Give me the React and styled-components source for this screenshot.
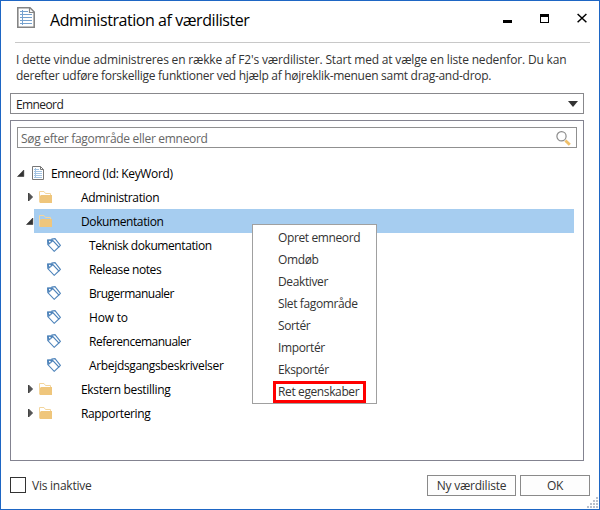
import React from "react";
import styled, { createGlobalStyle } from "styled-components";

const tree = [
  { label: "Administration", type: "folder", spacing: "-0.34px" },
  { label: "Dokumentation", type: "folder", open: true, selected: true, spacing: "-0.4px" },
  { label: "Teknisk dokumentation", type: "tag", spacing: "-0.42px" },
  { label: "Release notes", type: "tag", spacing: "-0.4px" },
  { label: "Brugermanualer", type: "tag", spacing: "-0.5px" },
  { label: "How to", type: "tag", spacing: "-0.2px" },
  { label: "Referencemanualer", type: "tag", spacing: "-0.5px" },
  { label: "Arbejdsgangsbeskrivelser", type: "tag", spacing: "-0.34px" },
  { label: "Ekstern bestilling", type: "folder", spacing: "-0.32px" },
  { label: "Rapportering", type: "folder", spacing: "-0.36px" },
];

const menuItems = [
  "Opret emneord",
  "Omdøb",
  "Deaktiver",
  "Slet fagområde",
  "Sortér",
  "Importér",
  "Eksportér",
  "Ret egenskaber",
];

const TitleIcon = () => (
  <svg width="18" height="21" viewBox="0 0 18 21">
    <path d="M.8.8H13L17.2 5V20.2H.8Z" fill="#fff" stroke="#858585" strokeWidth="1.6" />
    <path d="M12.5 1V5.5H17" fill="none" stroke="#858585" strokeWidth="1.2" />
    <path d="M3 4.5H11M3 7.5H15M3 10.5H15M3 13.5H15M3 16.5H15M5.5 3V18" stroke="#76a2cf" />
  </svg>
);

const ListIcon = () => (
  <svg width="12" height="14" viewBox="0 0 12 14">
    <path d="M.5.5H8.5L11.5 3.5V13.5H.5Z" fill="#fff" stroke="#777" />
    <path d="M8.5.5V3.5H11.5" fill="none" stroke="#777" />
    <path d="M2 3.5H7M2 5.5H10M2 7.5H10M2 9.5H10M2 11.5H10M3.5 2V12" stroke="#a3c3e2" />
  </svg>
);

const FolderIcon = () => (
  <svg width="13" height="12" viewBox="0 0 13 12">
    <path d="M.5 11.5V.5H5L6.5 2.5H11.5V4" fill="none" stroke="#f3d59c" />
    <path d="M2 4H13V12H1V5Z" fill="#efc67c" />
  </svg>
);

const TagIcon = () => (
  <svg width="14" height="14" viewBox="0 0 14 14">
    <path d="M4.4 1.1 8 .6 13.4 7.4 12 9" fill="#fff" stroke="#4d83ba" strokeWidth="1.1" />
    <path d="M.6 2 5.6 2.4 11.9 9 7.2 13.3.8 6.6Z" fill="#fff" stroke="#4d83ba" strokeWidth="1.1" />
    <path d="M.4 1.7 5.4 1.3 6 3.2 1.4 7.2Z" fill="#4d83ba" />
    <circle cx="2.8" cy="3.6" r=".9" fill="#fff" />
  </svg>
);

const SearchIcon = () => (
  <svg width="15" height="15" viewBox="0 0 15 15">
    <circle cx="5.5" cy="5.3" r="4.6" fill="#fff" stroke="#8b8b8b" strokeWidth="1.2" />
    <path d="M9.4 9.4 13.8 13.8" stroke="#efbf68" strokeWidth="2.8" />
  </svg>
);

const Arrow = ({ open }) => (
  <svg width="8" height="10" viewBox="0 0 8 10">
    {open ? (
      <path d="M6.8 2V8.5H.5Z" fill="#333" stroke="#222" strokeWidth=".5" />
    ) : (
      <path d="M2.5 1 6.5 5 2.5 9Z" fill="#555" stroke="#444" strokeWidth="1" />
    )}
  </svg>
);

const Grip = () => (
  <svg width="12" height="12" viewBox="0 0 12 12" fill="#b9c0cc">
    <path d="M9 0h2v2H9zM6 3h2v2H6zM9 3h2v2H9zM3 6h2v2H3zM6 6h2v2H6zM9 6h2v2H9zM0 9h2v2H0zM3 9h2v2H3zM6 9h2v2H6zM9 9h2v2H9z" />
  </svg>
);

const App = () => {
  return (
    <>
      <GlobalStyle />
      <S.Window>
        <S.Header>
          <TitleIcon />
          <S.Title>Administration af værdilister</S.Title>
          <S.Controls>
            <svg width="84" height="14" viewBox="0 0 84 14">
              <path d="M0 8H9V11H0Z" />
              <path d="M37 2H46V11H37ZM38 5V10H45V5Z" fillRule="evenodd" />
              <path d="M74.6 2 83.4 10.2M83.4 2 74.6 10.2" stroke="#000" strokeWidth="1.5" />
            </svg>
          </S.Controls>
        </S.Header>
        <S.Intro>
          <S.IntroLine $spacing="-0.17px">
            I dette vindue administreres en række af F2's værdilister. Start med at vælge en liste nedenfor. Du kan
          </S.IntroLine>
          <S.IntroLine $spacing="-0.28px">
            derefter udføre forskellige funktioner ved hjælp af højreklik-menuen samt drag-and-drop.
          </S.IntroLine>
        </S.Intro>
        <S.Select>
          <span>Emneord</span>
          <svg width="10" height="6" viewBox="0 0 10 6">
            <path d="M0 0H10L5 6Z" fill="#333" />
          </svg>
        </S.Select>
        <S.Panel>
          <S.Search>
            <span>Søg efter fagområde eller emneord</span>
            <SearchIcon />
          </S.Search>
          <S.Root>
            <Arrow open />
            <ListIcon />
            <S.Label $spacing="-0.36px">Emneord (Id: KeyWord)</S.Label>
          </S.Root>
          {tree.map((item) => (
            <S.Row key={item.label}>
              <S.Toggle>{item.type === "folder" && <Arrow open={item.open} />}</S.Toggle>
              <S.Item $selected={item.selected} $type={item.type}>
                <S.IconBox>{item.type === "folder" ? <FolderIcon /> : <TagIcon />}</S.IconBox>
                <S.Label $spacing={item.spacing}>{item.label}</S.Label>
              </S.Item>
            </S.Row>
          ))}
        </S.Panel>
        <S.Footer>
          <S.CheckBox />
          <S.CheckLabel>Vis inaktive</S.CheckLabel>
          <S.Button $width="89px">Ny værdiliste</S.Button>
          <S.Button $width="70px">OK</S.Button>
        </S.Footer>
        <S.Menu>
          {menuItems.map((label) => (
            <S.MenuItem key={label} $marked={label === "Ret egenskaber"}>
              <S.Label $spacing="-0.38px">{label}</S.Label>
            </S.MenuItem>
          ))}
        </S.Menu>
        <S.Corner>
          <Grip />
        </S.Corner>
      </S.Window>
    </>
  );
};

const GlobalStyle = createGlobalStyle`
  * {
    box-sizing: border-box;
  }
  body {
    margin: 0;
    background: #fff;
  }
  svg {
    display: block;
    flex-shrink: 0;
  }
`;

const S = {
  Window: styled.div`
    position: relative;
    display: flex;
    flex-direction: column;
    width: 600px;
    height: 510px;
    border: 1px solid #1e66c4;
    background: #fff;
    color: #1a1a1a;
    font-family: "Open Sans", "Noto Sans", sans-serif;
    font-size: 12px;
    line-height: 16px;
    letter-spacing: -0.25px;
    white-space: nowrap;
  `,
  Header: styled.div`
    display: flex;
    align-items: flex-start;
    height: 42px;
    margin: 0 9px 0 14px;
    padding: 6px 0 0 2px;
    border-bottom: 1px solid #c8c8c8;
  `,
  Title: styled.h1`
    margin: 2px 0 0 15px;
    color: #000;
    font-size: 16px;
    font-weight: normal;
    line-height: 22px;
    letter-spacing: -0.44px;
  `,
  Controls: styled.div`
    margin: 5px 3px 0 auto;
  `,
  Intro: styled.div`
    height: 50px;
    padding: 9px 0 0 15px;
    color: #333;
  `,
  IntroLine: styled.div`
    letter-spacing: ${({ $spacing }) => $spacing};
  `,
  Label: styled.span`
    padding-top: 2px;
    letter-spacing: ${({ $spacing }) => $spacing};
  `,
  Select: styled.div`
    display: flex;
    align-items: center;
    justify-content: space-between;
    width: 574px;
    height: 21px;
    margin-left: 9px;
    padding: 0 5px;
    border: 1px solid #88888c;
    color: #222;
    letter-spacing: -0.6px;
    > span {
      padding-top: 2px;
    }
  `,
  Panel: styled.div`
    width: 574px;
    height: 341px;
    margin: 6px 0 0 9px;
    padding: 6px;
    border: 1px solid #838390;
  `,
  Search: styled.div`
    display: flex;
    align-items: center;
    justify-content: space-between;
    height: 21px;
    margin-bottom: 13px;
    padding: 0 4px 0 3px;
    border: 1px solid #909090;
    color: #666;
    letter-spacing: -0.3px;
    > span {
      padding-top: 2px;
    }
    > svg {
      margin: 1px 1px 0 0;
    }
  `,
  Root: styled.div`
    display: flex;
    align-items: center;
    height: 24px;
    color: #000;
    > span {
      margin-left: 7px;
    }
    > svg + svg {
      margin-left: 7px;
    }
  `,
  Row: styled.div`
    display: flex;
    height: 24px;
    color: #000;
  `,
  Toggle: styled.div`
    display: flex;
    align-items: center;
    width: 17px;
    padding-left: 9px;
  `,
  Item: styled.div`
    display: flex;
    align-items: center;
    width: 540px;
    padding-left: ${({ $type }) => ($type === "tag" ? "13px" : "5px")};
    background: ${({ $selected }) => ($selected ? "#a6cdf0" : "none")};
  `,
  IconBox: styled.div`
    width: 42px;
  `,
  Footer: styled.div`
    display: flex;
    height: 48px;
    padding: 14px 9px 0;
    color: #333;
  `,
  CheckBox: styled.div`
    width: 16px;
    height: 16px;
    margin: 2px 6px 0 0;
    border: 1px solid #333;
  `,
  CheckLabel: styled.div`
    margin: 3px auto 0 0;
  `,
  Button: styled.button`
    width: ${({ $width }) => $width};
    height: 21px;
    margin-left: 4px;
    padding: 1px 0 0;
    border: 1px solid #8a8a8a;
    background: #fdfdfd;
    color: #333;
    font: inherit;
    letter-spacing: inherit;
  `,
  Menu: styled.div`
    position: absolute;
    top: 223px;
    left: 251px;
    width: 125px;
    height: 180px;
    padding: 2px 0 0;
    border: 1px solid #a0a0a0;
    background: #fff;
    color: #333;
  `,
  MenuItem: styled.div`
    display: flex;
    align-items: center;
    height: 22px;
    margin: 0 10px 0 20px;
    padding-left: ${({ $marked }) => ($marked ? "2px" : "5px")};
    border: ${({ $marked }) => ($marked ? "3px solid #f00" : "none")};
    > span {
      padding-top: 0;
    }
  `,
  Corner: styled.div`
    position: absolute;
    right: 0;
    bottom: 0;
  `,
};

export default App;
